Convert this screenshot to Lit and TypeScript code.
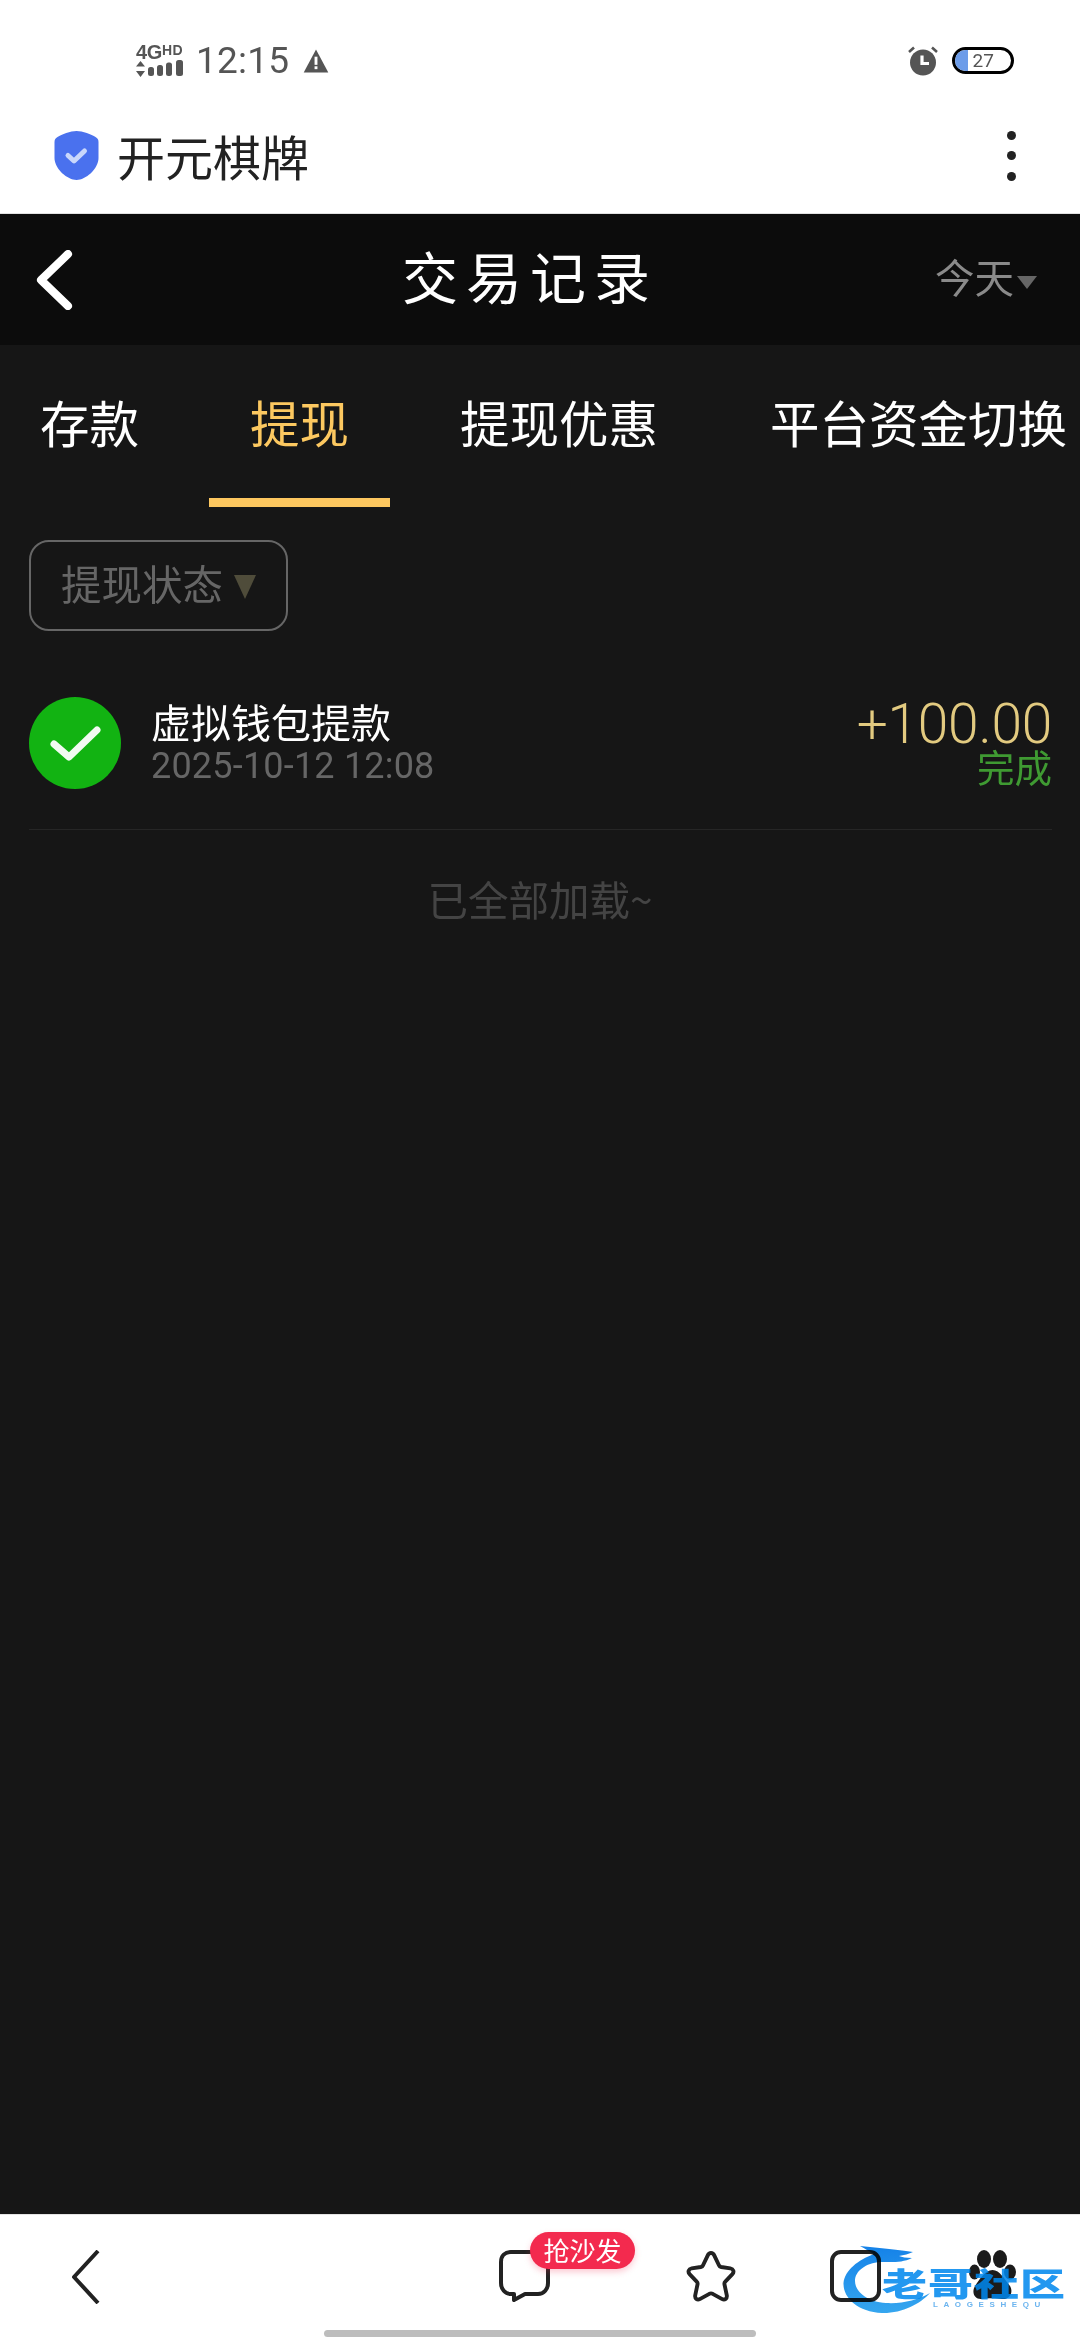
import { LitElement, html, css, unsafeCSS } from "lit";
import { customElement } from "lit/decorators.js";

const CJK = unsafeCSS(`"Noto Sans CJK SC", "Noto Sans", sans-serif`);

@customElement("app-root")
export class AppRoot extends LitElement {
  static styles = css`
    :host {
      display: flex;
      flex-direction: column;
      width: 1080px;
      height: 2340px;
      overflow: hidden;
      background: #161616;
      font-family: Roboto, "Noto Sans CJK SC", "Noto Sans", sans-serif;
    }
    * { box-sizing: border-box; }
    svg { display: block; flex: none; }

    .status {
      height: 106px;
      background: #fff;
      display: flex;
      align-items: center;
      padding: 16px 66px 0 136px;
      color: #555;
      flex: none;
    }
    .net { width: 48px; margin-right: 12px; }
    .net-top { display: flex; align-items: flex-start; height: 15px; color: #555; }
    .net-4g { font: 700 20px/15px "Liberation Sans", sans-serif; letter-spacing: -0.3px; }
    .net-hd { font: 700 14px/10px "Liberation Sans", sans-serif; letter-spacing: 0.3px; }
    .time { font-size: 37px; line-height: 44px; letter-spacing: 0.2px; color: #555; width: 107px; }
    .status-gap { flex: 1; }
    .battery {
      margin-left: 14px;
      width: 62px;
      height: 27px;
      border: 3.5px solid #000;
      border-radius: 14px;
      overflow: hidden;
      display: flex;
      align-items: center;
      background: #fff;
      margin-top: -1px;
    }
    .batt-fill { width: 12.5px; height: 100%; background: #6c9ce9; flex: none; }
    .batt-num { font-size: 19px; color: #555; margin-left: 5px; line-height: 20px; }

    .browser {
      height: 108px;
      background: #fff;
      border-bottom: 1px solid #e2e2e2;
      display: flex;
      align-items: center;
      padding: 0 0 0 54px;
      flex: none;
    }
    .shield { margin-top: -8px; }
    .browser-title {
      margin-left: 18px;
      font: 400 48px/60px ${CJK};
      color: #222;
      flex: 1;
      margin-top: -10px;
    }
    .dots { width: 9px; display: flex; flex-direction: column; gap: 11.5px; margin-right: 64px; margin-top: -8px; }
    .dots i { display: block; width: 9px; height: 9px; border-radius: 50%; background: #222; }

    .header {
      height: 131px;
      background: #0c0c0c;
      display: grid;
      grid-template-columns: 366px auto 1fr;
      align-items: center;
      padding: 0 0 0 36px;
      flex: none;
    }
    .title {
      font: 400 56px/70px ${CJK};
      letter-spacing: 8px;
      color: #fff;
      margin-top: -10px;
    }
    .today {
      justify-self: end;
      display: flex;
      align-items: center;
      margin-right: 43px;
      margin-top: -8px;
      color: #8a8a8a;
      font: 400 39.5px/50px ${CJK};
    }
    .today-tri { width: 0; height: 0; border-left: 10.5px solid transparent; border-right: 10.5px solid transparent; border-top: 13px solid #666; margin: 14px 0 0 3px; }

    .tabs {
      height: 162px;
      display: flex;
      align-items: flex-start;
      flex: none;
    }
    .tab {
      font: 400 49.5px/60px ${CJK};
      color: #fff;
      white-space: nowrap;
      padding-top: 47px;
      height: 162px;
      flex: none;
    }
    .tab.on {
      color: #fcc860;
      border-bottom: 9px solid #fdc75f;
      text-align: center;
    }
    .t1 { width: 209px; padding-left: 40px; }
    .t2 { width: 181px; }
    .t3 { width: 380px; padding-left: 70px; }
    .t4 { width: 300px; }

    .filter-wrap { padding: 33px 0 0 29px; flex: none; }
    .filter {
      width: 259px;
      height: 91px;
      border: 2px solid #666;
      border-radius: 20px;
      display: flex;
      align-items: center;
      padding-left: 30px;
      color: #666;
      font: 400 40.5px/50px ${CJK};
    }
    .filter-label { margin-top: -6px; }
    .filter-tri { width: 0; height: 0; border-left: 11.5px solid transparent; border-right: 11.5px solid transparent; border-top: 24px solid #4f4c3a; margin-left: 11px; margin-top: 2px; }

    .row {
      margin: 66px 28px 0 29px;
      height: 133px;
      border-bottom: 1px solid #262626;
      display: flex;
      align-items: flex-start;
      flex: none;
    }
    .mid { margin-left: 30px; flex: 1; display: flex; flex-direction: column; padding-top: 2px; gap: 3px; }
    .name { font: 400 40px/44px ${CJK}; color: #fff; }
    .date { font: 400 36px/40px Roboto, sans-serif; color: #666; letter-spacing: 0.2px; }
    .right { display: flex; flex-direction: column; align-items: flex-end; padding-top: 3px; }
    .amount { font: 300 55px/48px Roboto, sans-serif; color: #e2ca80; letter-spacing: -0.2px; }
    .state { font: 400 37.5px/36px ${CJK}; color: #3f9a32; }

    .end {
      text-align: center;
      margin-top: 44px;
      font: 400 40.5px/50px ${CJK};
      color: #444;
      flex: none;
    }
    .spacer { flex: 1; }

    .bottom {
      height: 126px;
      background: #fff;
      border-top: 1px solid #e4e4e4;
      flex: none;
      position: relative;
      display: flex;
      align-items: flex-start;
      padding: 35px 0 0 72px;
    }
    .b-comment { margin-left: 399px; position: relative; }
    .b-star { margin-left: 134px; }
    .b-square { margin-left: 92px; }
    .b-paw { margin-left: 88px; }
    .badge {
      position: absolute;
      left: 31px;
      top: -18px;
      width: 105px;
      height: 37px;
      border-radius: 19px;
      background: #f32a4e;
      color: #fff;
      font: 400 26px/35px ${CJK};
      text-align: center;
      box-shadow: 0 3px 6px rgba(243, 42, 78, 0.25);
    }
    .swirl {
      position: absolute;
      left: 840px;
      top: 25px;
      filter: blur(0.7px);
      mix-blend-mode: multiply;
    }
    .mark-cn {
      position: absolute;
      left: 882px;
      top: 55px;
      font: 900 45px/24px ${CJK};
      color: #0088ee;
      opacity: 0.86;
      letter-spacing: 1px;
      white-space: nowrap;
      transform: scaleY(0.72);
      transform-origin: left center;
      filter: blur(0.6px);
    }
    .mark-en {
      position: absolute;
      left: 933px;
      top: 86px;
      font: 700 8px/8px "Liberation Sans", sans-serif;
      color: #6db5ef;
      letter-spacing: 5.6px;
      white-space: nowrap;
      mix-blend-mode: multiply;
    }
    .home {
      position: absolute;
      left: 324px;
      top: 115px;
      width: 432px;
      height: 7px;
      border-radius: 4px;
      background: #bdbdbd;
    }
  `;

  render() {
    return html`
      <div class="status">
        <div class="net">
          <div class="net-top"><span class="net-4g">4G</span><span class="net-hd">HD</span></div>
          <svg width="48" height="18" viewBox="0 0 48 18">
            <path d="M4.5 1 L9 6.5 H0Z M4.5 17 L0 11 H9Z" fill="#555" />
            <rect x="12" y="7" width="6" height="9" rx="2.5" fill="#555" />
            <rect x="21" y="5" width="6" height="11" rx="2.5" fill="#555" />
            <rect x="30" y="2.5" width="6" height="13.5" rx="2.5" fill="#555" />
            <rect x="40" y="0" width="7" height="16" rx="2.5" fill="#555" />
          </svg>
        </div>
        <div class="time">12:15</div>
        <svg width="26" height="24" viewBox="0 0 26 25">
          <path d="M13 0.5 L25.8 24.5 H0.2Z" fill="#555" />
          <rect x="11.5" y="8" width="3" height="8.5" fill="#fff" />
          <rect x="11.5" y="18" width="3" height="3" fill="#fff" />
        </svg>
        <div class="status-gap"></div>
        <svg width="30" height="30" viewBox="0 0 30 30">
          <circle cx="15" cy="16.5" r="13" fill="#555" />
          <path d="M1 6 L6 1.5 M29 6 L24 1.5" stroke="#555" stroke-width="2.6" />
          <path d="M14 9.5 V17.5 H21" stroke="#fff" stroke-width="3.2" fill="none" />
        </svg>
        <div class="battery"><div class="batt-fill"></div><span class="batt-num">27</span></div>
      </div>

      <div class="browser">
        <svg class="shield" width="45" height="49" viewBox="0 0 44 49">
          <path d="M22 0 C28 0 37 3.5 41 6 C43 7.3 44 8.5 44 11 V27 C44 38 31 49 22 49 C13 49 0 38 0 27 V11 C0 8.5 1 7.3 3 6 C7 3.5 16 0 22 0Z" fill="#4a71ee" />
          <path d="M13.5 24.5 L19.5 30 L30 20" fill="none" stroke="#c9d7fb" stroke-width="5" stroke-linecap="round" stroke-linejoin="round" />
        </svg>
        <div class="browser-title">开元棋牌</div>
        <div class="dots"><i></i><i></i><i></i></div>
      </div>

      <div class="header">
        <svg width="40" height="60" viewBox="0 0 40 60">
          <path d="M32 4 L5 30 L32 56" fill="none" stroke="#fff" stroke-width="8" stroke-linecap="round" stroke-linejoin="round" />
        </svg>
        <div class="title">交易记录</div>
        <div class="today">今天<span class="today-tri"></span></div>
      </div>

      <div class="tabs">
        <div class="tab t1">存款</div>
        <div class="tab t2 on">提现</div>
        <div class="tab t3">提现优惠</div>
        <div class="tab t4">平台资金切换</div>
      </div>

      <div class="filter-wrap">
        <div class="filter"><span class="filter-label">提现状态</span><span class="filter-tri"></span></div>
      </div>

      <div class="row">
        <svg width="92" height="92" viewBox="0 0 92 92">
          <circle cx="46" cy="46" r="46" fill="#12b312" />
          <path d="M25 47 L40 60 L68 33" fill="none" stroke="#f2fbf2" stroke-width="7" stroke-linecap="round" stroke-linejoin="round" />
        </svg>
        <div class="mid">
          <div class="name">虚拟钱包提款</div>
          <div class="date">2025-10-12 12:08</div>
        </div>
        <div class="right">
          <div class="amount">+100.00</div>
          <div class="state">完成</div>
        </div>
      </div>

      <div class="end">已全部加载~</div>
      <div class="spacer"></div>

      <div class="bottom">
        <svg width="28" height="54" viewBox="0 0 28 54">
          <path d="M26 1 L2 27 L26 53" fill="none" stroke="#222" stroke-width="4" stroke-linejoin="round" />
        </svg>
        <div class="b-comment">
          <svg width="51" height="52" viewBox="0 0 51 52">
            <path d="M12 2 H39 C45 2 49 6 49 12 V33 C49 39 45 44 39 44 H26 L15 50 V44 H12 C6 44 2 39 2 33 V12 C2 6 6 2 12 2Z" fill="none" stroke="#222" stroke-width="4" stroke-linejoin="round" />
          </svg>
          <div class="badge">抢沙发</div>
        </div>
        <svg class="b-star" width="54" height="53" viewBox="0 0 48 52">
          <path d="M24 3 C25.5 3 26.6 4 27.3 5.5 L31.8 15 C32.2 16 33 16.5 34 16.7 L43 18 C46 18.5 47 21.5 45 23.6 L38 31 C37.2 31.8 37 32.6 37.2 33.6 L39.5 44.5 C40 47.5 37.5 49.5 35 48.2 L25.6 43 C24.6 42.5 23.4 42.5 22.4 43 L13 48.2 C10.5 49.5 8 47.5 8.5 44.5 L10.8 33.6 C11 32.6 10.8 31.8 10 31 L3 23.6 C1 21.5 2 18.5 5 18 L14 16.7 C15 16.5 15.8 16 16.2 15 L20.7 5.5 C21.4 4 22.5 3 24 3Z" fill="none" stroke="#222" stroke-width="3.8" stroke-linejoin="round" />
        </svg>
        <svg class="b-square" width="51" height="52" viewBox="0 0 51 52">
          <rect x="2" y="2" width="47" height="48" rx="9" fill="none" stroke="#222" stroke-width="4" />
        </svg>
        <svg class="b-paw" width="47" height="50" viewBox="0 0 47 50">
          <ellipse cx="15" cy="9" rx="7" ry="9" fill="#1b1b1b" />
          <ellipse cx="31" cy="9" rx="7" ry="9" fill="#1b1b1b" />
          <ellipse cx="5.5" cy="22" rx="5.5" ry="7.5" fill="#1b1b1b" />
          <ellipse cx="41" cy="22" rx="6" ry="7.5" fill="#1b1b1b" />
          <path d="M23.5 20 C31 20 35 29 41 36 C45 43 40 50 33 49 C28 48 18 48 13 49 C6 50 2 43 6 36 C11 29 16 20 23.5 20Z" fill="#1b1b1b" />
        </svg>
        <svg class="swirl" width="100" height="80" viewBox="840 2240 100 80">
          <defs>
            <linearGradient id="sw" x1="0" y1="0" x2="0" y2="1">
              <stop offset="0" stop-color="#1582e8" />
              <stop offset="1" stop-color="#35a6ef" />
            </linearGradient>
          </defs>
          <path d="M913 2252 C900 2250 880 2248 860 2246 C866 2249 870 2252 874 2254 C858 2260 845 2270 843.5 2283 C843 2298 858 2312 882 2313 C902 2313.5 920 2304 930 2293 C918 2300 902 2304 886 2303 C868 2302 855 2292 855 2281 C855 2271 866 2263 880 2262 C892 2262 902 2263 912 2258 C906 2258 902 2257 899 2256 C904 2255 909 2254 913 2252Z" fill="url(#sw)" />
        </svg>
        <div class="mark-cn">老哥社区</div>
        <div class="mark-en">LAOGESHEQU</div>
        <div class="home"></div>
      </div>
    `;
  }
}
